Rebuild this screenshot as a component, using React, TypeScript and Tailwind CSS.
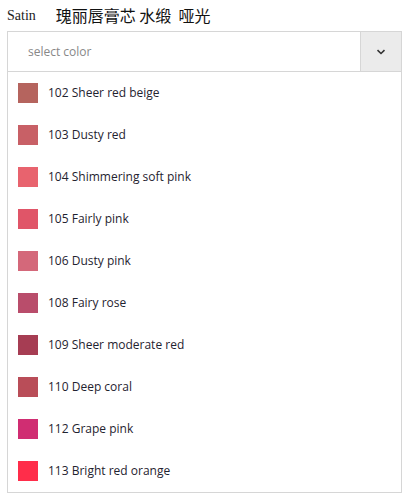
const colors = [
  { name: '102 Sheer red beige', hex: '#b5645e' },
  { name: '103 Dusty red', hex: '#c86066' },
  { name: '104 Shimmering soft pink', hex: '#e8636e' },
  { name: '105 Fairly pink', hex: '#e05568' },
  { name: '106 Dusty pink', hex: '#d4687a' },
  { name: '108 Fairy rose', hex: '#b94d6b' },
  { name: '109 Sheer moderate red', hex: '#a63d53' },
  { name: '110 Deep coral', hex: '#b94d58' },
  { name: '112 Grape pink', hex: '#d02d72' },
  { name: '113 Bright red orange', hex: '#ff2d4a' },
]

export default function App() {
  return (
    <div className="bg-white w-[413px] h-[498px] pl-[7px] pt-[3px]">
      <div className="flex items-center h-[24px] mb-[4px]">
        <span className="font-['Liberation_Serif',serif] text-[14px] text-[#222]">Satin</span>
        <span className="ml-[20px] font-['Noto_Sans_CJK_SC',sans-serif] text-[16px] text-[#111]">
          瑰丽唇膏芯 水缎&nbsp; 哑光
        </span>
      </div>
      <div className="w-[395px] border border-[#d6d6d6] font-['Open_Sans',sans-serif]">
        <div className="flex h-[40px] border-b border-[#d6d6d6]">
          <div className="flex-1 flex items-center pl-[20px] text-[12px] text-[#888]">select color</div>
          <div className="w-[41px] bg-[#ebebeb] border-l border-[#d6d6d6] flex items-center justify-center">
            <svg width="10" height="6" viewBox="0 0 10 6" fill="none">
              <path d="M1.5 1.2 L5 4.5 L8.5 1.2" stroke="#333" strokeWidth="1.6" />
            </svg>
          </div>
        </div>
        <ul>
          {colors.map((c) => (
            <li key={c.name} className="flex items-center h-[42px] pl-[10px]">
              <span className="w-[20px] h-[20px] shrink-0" style={{ backgroundColor: c.hex }} />
              <span className="ml-[10px] text-[12px] text-[#1f2330]">{c.name}</span>
            </li>
          ))}
        </ul>
      </div>
    </div>
  )
}
